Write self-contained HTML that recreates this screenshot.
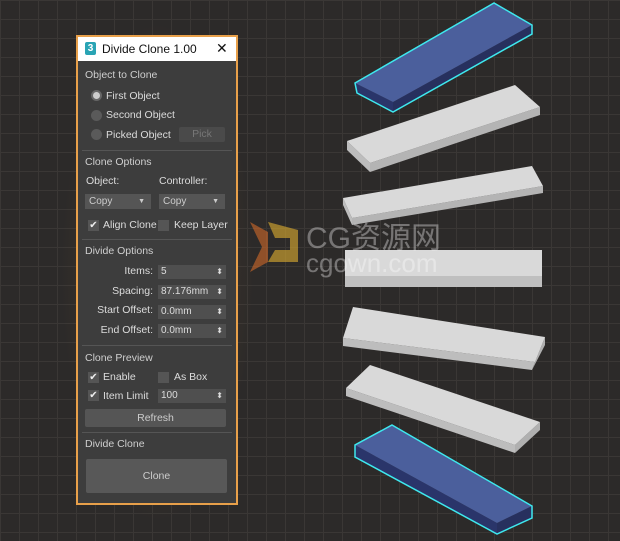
<!DOCTYPE html>
<html><head><meta charset="utf-8"><style>
body{margin:0;width:620px;height:541px;overflow:hidden;background:#2c2a29;font-family:"Liberation Sans",sans-serif;}
.bg{position:absolute;left:0;top:0;width:620px;height:541px;
background-image:linear-gradient(#3a3735 1px,transparent 1px),linear-gradient(90deg,#3a3735 1px,transparent 1px);background-size:19px 19px;}
.glow{position:absolute;left:60px;top:20px;width:195px;height:505px;background:radial-gradient(ellipse at center,rgba(150,100,50,.35),rgba(0,0,0,0) 70%);}
.panel{position:absolute;left:76px;top:35px;width:158px;height:466px;border:2px solid #e8a04a;background:#3d3d3d;}
.title{position:absolute;left:0;top:0;width:158px;height:24px;background:#fff;color:#111;font-size:12px;}
.p{position:absolute;color:#dcdcdc;font-size:10.5px;white-space:nowrap;}
.h{color:#cfcfcf;}
.sep{position:absolute;left:4px;width:150px;height:1px;background:#555;}
.rad{position:absolute;width:11px;height:11px;border-radius:50%;background:#5a5a5a;}
.cb{position:absolute;width:11px;height:11px;background:#555;color:#eee;font-size:10px;line-height:11px;text-align:center;}
.dd{position:absolute;height:15px;background:#555;color:#ccc;font-size:10px;line-height:15px;padding-left:4px;box-sizing:border-box;}
.sp{position:absolute;left:80px;width:68px;height:14px;background:#4f4f4f;color:#ddd;font-size:10px;line-height:14px;padding-left:3px;box-sizing:border-box;}
.sp:after{content:"⬍";position:absolute;right:3px;top:0;font-size:8px;}
.btn{position:absolute;background:#555;color:#ccc;font-size:10.5px;text-align:center;border-radius:2px;}
</style></head><body>
<div class="bg"></div>
<div class="glow"></div>
<svg style="position:absolute;left:0;top:0" width="620" height="541">
<!-- slab1 blue -->
<polygon points="355,83 393,102 393,112 357,93" fill="#2a356a"/>
<polygon points="393,102 532,25 532,34 393,112" fill="#27305e"/>
<polygon points="355,83 494,3 532,25 393,102" fill="#4b5f9c"/>
<polygon points="355,83 494,3 532,25 532,34 393,112 357,93" fill="none" stroke="#3ee8ee" stroke-width="1.5"/>
<!-- slab2 -->
<polygon points="347,141 370,163 370,172 347,150" fill="#bdbdbd"/>
<polygon points="370,163 540,107 540,115 370,172" fill="#b4b4b4"/>
<polygon points="347,141 515,85 540,107 370,163" fill="#d9d9d9"/>
<!-- slab3 -->
<polygon points="343,198 352,218 352,225 343,205" fill="#bdbdbd"/>
<polygon points="352,218 543,186 543,193 352,225" fill="#b4b4b4"/>
<polygon points="343,198 532,166 543,186 352,218" fill="#d9d9d9"/>
<!-- slab4 -->
<rect x="345" y="250" width="197" height="26" fill="#d9d9d9"/>
<rect x="345" y="276" width="197" height="11" fill="#bfbfbf"/>
<!-- slab5 -->
<polygon points="343,338 535,362 532,370 343,346" fill="#bdbdbd"/>
<polygon points="545,337 545,345 532,370 535,362" fill="#b0b0b0"/>
<polygon points="353,307 545,337 535,362 343,338" fill="#d9d9d9"/>
<!-- slab6 -->
<polygon points="346,388 515,445 515,453 346,396" fill="#bdbdbd"/>
<polygon points="540,422 540,430 515,453 515,445" fill="#b0b0b0"/>
<polygon points="370,365 540,422 515,445 346,388" fill="#d9d9d9"/>
<!-- slab7 blue -->
<polygon points="355,445 497,523 497,534 355,457" fill="#2a356a"/>
<polygon points="532,506 532,518 497,534 497,523" fill="#27305e"/>
<polygon points="392,425 532,506 497,523 355,445" fill="#4b5f9c"/>
<polygon points="392,425 532,506 532,518 497,534 355,457 355,445" fill="none" stroke="#3ee8ee" stroke-width="1.5"/>
<!-- watermark -->
<g opacity="0.6">
<polygon points="250,222 268,232 268,262 250,272 262,247" fill="#d26a2a"/>
<polygon points="268,222 298,230 298,262 268,262 275,250 290,250 290,238 275,238" fill="#e0b030"/>
</g>
<g fill="#ffffff" opacity="0.35">
<text x="306" y="248" font-size="30" font-family="Liberation Sans,Noto Sans CJK SC,sans-serif">CG资源网</text>
<text x="306" y="272" font-size="26" font-family="Liberation Sans,sans-serif">cgown.com</text>
</g>
</svg>
<div class="panel">
 <div class="title"><span style="position:absolute;left:7px;top:5px;width:11px;height:13px;background:#29a4b4;color:#fff;font-size:10px;font-weight:bold;text-align:center;line-height:13px;border-radius:2px">3</span><span style="position:absolute;left:24px;top:5px">Divide Clone 1.00</span><span style="position:absolute;left:138px;top:3px;font-size:14px">✕</span></div>
 <div class="p h" style="left:7px;top:32px">Object to Clone</div>
 <div class="rad" style="left:13px;top:53px;background:#ccc;border:2px solid #666;width:7px;height:7px"></div><div class="p" style="left:28px;top:53px">First Object</div>
 <div class="rad" style="left:13px;top:73px"></div><div class="p" style="left:28px;top:72px">Second Object</div>
 <div class="rad" style="left:13px;top:92px"></div><div class="p" style="left:28px;top:92px">Picked Object</div>
 <div class="btn" style="left:101px;top:90px;width:46px;height:15px;line-height:15px;color:#777;background:#4a4a4a">Pick</div>
 <div class="sep" style="top:113px"></div>
 <div class="p h" style="left:7px;top:119px">Clone Options</div>
 <div class="p" style="left:8px;top:138px">Object:</div><div class="p" style="left:81px;top:138px">Controller:</div>
 <div class="dd" style="left:7px;top:157px;width:66px">Copy<span style="position:absolute;right:6px;font-size:7px">▼</span></div>
 <div class="dd" style="left:81px;top:157px;width:66px">Copy<span style="position:absolute;right:6px;font-size:7px">▼</span></div>
 <div class="cb" style="left:10px;top:183px">✔</div><div class="p" style="left:25px;top:182px">Align Clone</div>
 <div class="cb" style="left:80px;top:183px"></div><div class="p" style="left:96px;top:182px">Keep Layer</div>
 <div class="sep" style="top:202px"></div>
 <div class="p h" style="left:7px;top:208px">Divide Options</div>
 <div class="p" style="right:83px;top:228px">Items:</div><div class="sp" style="top:228px">5</div>
 <div class="p" style="right:83px;top:248px">Spacing:</div><div class="sp" style="top:248px">87.176mm</div>
 <div class="p" style="right:83px;top:267px">Start Offset:</div><div class="sp" style="top:268px">0.0mm</div>
 <div class="p" style="right:83px;top:287px">End Offset:</div><div class="sp" style="top:287px">0.0mm</div>
 <div class="sep" style="top:308px"></div>
 <div class="p h" style="left:7px;top:315px">Clone Preview</div>
 <div class="cb" style="left:10px;top:335px">✔</div><div class="p" style="left:25px;top:334px">Enable</div>
 <div class="cb" style="left:80px;top:335px"></div><div class="p" style="left:96px;top:334px">As Box</div>
 <div class="cb" style="left:10px;top:353px">✔</div><div class="p" style="left:25px;top:353px">Item Limit</div>
 <div class="sp" style="top:352px">100</div>
 <div class="btn" style="left:7px;top:372px;width:141px;height:18px;line-height:18px">Refresh</div>
 <div class="sep" style="top:395px"></div>
 <div class="p h" style="left:7px;top:401px">Divide Clone</div>
 <div class="btn" style="left:8px;top:422px;width:141px;height:34px;line-height:34px;background:#585858">Clone</div>
</div>
</body></html>
